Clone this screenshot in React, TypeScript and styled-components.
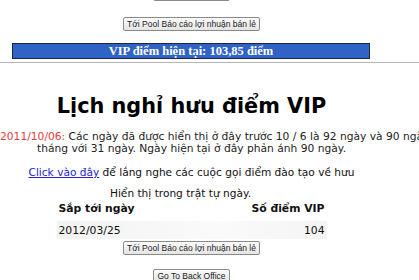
import { createGlobalStyle, styled } from "styled-components";

const GlobalStyle = createGlobalStyle`
  html, body {
    margin: 0;
    padding: 0;
    background: #ffffff;
    overflow: hidden;
  }
  body {
    font-family: "DejaVu Sans", Verdana, sans-serif;
    color: #111;
  }
`;

const Page = styled.div`
  width: 383px;
  text-align: center;
`;

const ButtonRow = styled.div<{ $top?: number }>`
  display: flex;
  justify-content: center;
  margin-top: ${(p) => p.$top ?? 0}px;
`;

const PlainButton = styled.button`
  font-family: "Liberation Sans", Arial, sans-serif;
  font-size: 8.5px;
  color: #222;
  height: 14px;
  padding: 0 3px;
  line-height: 12px;
  border: 1px solid #8a8a8a;
  border-radius: 2px;
  background: linear-gradient(#fbfbfb, #e4e4e4);
  cursor: pointer;
`;

const VipBar = styled.div`
  margin: 12px 0 0 12px;
  width: 356px;
  height: 14px;
  background: #2f63c6;
  border: 1px solid #1c2640;
  color: #fff;
  font-family: "Liberation Serif", "Times New Roman", serif;
  font-weight: bold;
  font-size: 12.5px;
  line-height: 14px;
  text-align: center;
`;

const Rule = styled.hr`
  width: 419px;
  margin: 3px 0 0;
  border: none;
  border-top: 1px solid #b5b5b5;
`;

const Title = styled.h1`
  margin: 29px 0 0;
  font-size: 20.8px;
  line-height: 28px;
  font-weight: bold;
  color: #000;
`;

const Notice = styled.div`
  margin-top: 11px;
  font-size: 10.7px;
  line-height: 12px;
  color: #222;
`;

const NoWrap = styled.span`
  white-space: nowrap;
`;

const DateMark = styled.span`
  color: #e23a40;
`;

const LinkLine = styled.div`
  margin-top: 11px;
  font-size: 10.6px;
  line-height: 12px;
`;

const Link = styled.a`
  color: #2323c8;
  text-decoration: underline;
`;

const Caption = styled.div`
  margin-top: 9px;
  padding-right: 22px;
  font-size: 10.6px;
  line-height: 12px;
`;

const Table = styled.div`
  width: 270px;
  margin: 0 auto;
`;

const TableRow = styled.div<{ $head?: boolean }>`
  display: grid;
  grid-template-columns: 1fr 1fr;
  height: 18px;
  align-items: center;
  padding: 0 2px;
  font-size: 10.8px;
  font-weight: ${(p) => (p.$head ? "bold" : "normal")};
  background: ${(p) =>
    p.$head ? "transparent" : "linear-gradient(90deg, #f2f2f2, #fafafa 60%, #f4f4f4)"};
  margin-top: ${(p) => (p.$head ? 0 : 4)}px;
`;

const Cell = styled.span<{ $right?: boolean }>`
  text-align: ${(p) => (p.$right ? "right" : "left")};
`;

export default function App() {
  return (
    <Page>
      <GlobalStyle />
      <ButtonRow $top={-13}>
        <PlainButton>Go To Back Office</PlainButton>
      </ButtonRow>
      <ButtonRow $top={16}>
        <PlainButton>Tới Pool Báo cáo lợi nhuận bán lẻ</PlainButton>
      </ButtonRow>
      <VipBar>VIP điểm hiện tại: 103,85 điểm</VipBar>
      <Rule />
      <Title>Lịch nghỉ hưu điểm VIP</Title>
      <Notice>
        <NoWrap>
          <DateMark>2011/10/06:</DateMark> Các ngày đã được hiển thị ở đây trước 10 / 6 là 92 ngày và 90 ngày cho các
        </NoWrap>
        <br />
        tháng với 31 ngày. Ngày hiện tại ở đây phản ánh 90 ngày.
      </Notice>
      <LinkLine>
        <Link href="#">Click vào đây</Link> để lắng nghe các cuộc gọi điểm đào tạo về hưu
      </LinkLine>
      <Caption>Hiển thị trong trật tự ngày.</Caption>
      <Table>
        <TableRow $head>
          <Cell>Sắp tới ngày</Cell>
          <Cell $right>Số điểm VIP</Cell>
        </TableRow>
        <TableRow>
          <Cell>2012/03/25</Cell>
          <Cell $right>104</Cell>
        </TableRow>
      </Table>
      <ButtonRow $top={2}>
        <PlainButton>Tới Pool Báo cáo lợi nhuận bán lẻ</PlainButton>
      </ButtonRow>
      <ButtonRow $top={14}>
        <PlainButton>Go To Back Office</PlainButton>
      </ButtonRow>
    </Page>
  );
}
